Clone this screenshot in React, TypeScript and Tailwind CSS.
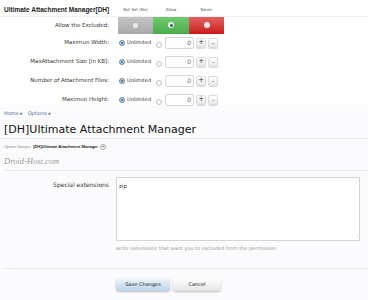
import React from "react";

const Radio = ({ on }: { on?: boolean }) =>
  on ? (
    <span className="inline-flex h-[6px] w-[6px] items-center justify-center rounded-full border border-[#7a9bb5] bg-[#2f5f80] shadow-[inset_0_0_0_1px_#d8e6f0]" />
  ) : (
    <span className="inline-block h-[6px] w-[6px] rounded-full border border-[#bdbdbd] bg-white" />
  );

const NumRow = ({ label }: { label: string }) => (
  <div className="flex h-[19px] items-center">
    <div className="w-[110px] pr-[1px] text-right text-[5.5px] text-[#333]">{label}</div>
    <div className="flex items-center pl-[9px]">
      <Radio on />
      <span className="ml-[2px] text-[5px] text-[#333]">Unlimited</span>
      <span className="ml-[5px]">
        <Radio />
      </span>
      <div className="ml-[3px] flex h-[12px] w-[29px] items-center justify-end rounded-[2px] border border-[#d6d6d6] bg-white pr-[2px] text-[6px] italic text-[#666]">
        0
      </div>
      <div className="ml-[2px] flex h-[10px] w-[10px] items-center justify-center rounded-[2px] border border-[#dcdcdc] bg-gradient-to-b from-white to-[#e6e6e6] text-[7px] leading-none text-[#333] shadow-[0_1px_1px_rgba(0,0,0,0.15)]">
        +
      </div>
      <div className="ml-[2px] flex h-[10px] w-[10px] items-center justify-center rounded-[2px] border border-[#dcdcdc] bg-gradient-to-b from-white to-[#e6e6e6] text-[6px] leading-none text-[#333] shadow-[0_1px_1px_rgba(0,0,0,0.15)]">
        -
      </div>
    </div>
  </div>
);

export default function App() {
  return (
    <div
      className="h-[300px] w-[368px] overflow-hidden bg-[#fbfbfd]"
      style={{ fontFamily: '"DejaVu Sans", Verdana, sans-serif' }}
    >
      {/* top panel */}
      <div className="h-[105px] bg-white pt-[4px]">
        <div className="flex h-[12px] items-center">
          <div
            className="w-[118px] whitespace-nowrap pl-[4px] text-[6.5px] font-bold text-[#222]"
            style={{ fontFamily: '"Liberation Sans", Arial, sans-serif' }}
          >
            Ultimate Attachment Manager[DH]
          </div>
          <div className="flex w-[106px] whitespace-nowrap text-[4px] text-[#555]">
            <span className="w-[35px] text-center">Not Set (No)</span>
            <span className="w-[36px] text-center">Allow</span>
            <span className="w-[35px] text-center">Never</span>
          </div>
        </div>
        <div className="flex h-[17px] items-center border-t border-[#f0f0f0]">
          <div className="w-[110px] pr-[1px] text-right text-[5.5px] text-[#333]">Allow the Excluded:</div>
          <div className="ml-[8px] flex h-[17px]">
            <div className="flex w-[35px] items-center justify-center bg-gradient-to-b from-[#c4c4c4] to-[#a9a9a9]">
              <span className="h-[5px] w-[5px] rounded-full bg-[#e9e9e9]" />
            </div>
            <div className="flex w-[36px] items-center justify-center bg-gradient-to-b from-[#73c872] to-[#49ad48]">
              <span className="flex h-[6px] w-[6px] items-center justify-center rounded-full bg-[#eef6ee]">
                <span className="h-[3px] w-[3px] rounded-full bg-[#2a5a78]" />
              </span>
            </div>
            <div className="flex w-[35px] items-center justify-center bg-gradient-to-b from-[#e26060] to-[#c81414]">
              <span className="h-[6px] w-[6px] rounded-full bg-[#f3e6e6]" />
            </div>
          </div>
        </div>
        <div>
          <NumRow label="Maximun Width:" />
          <NumRow label="MaxAttachment Size [in KB]:" />
          <NumRow label="Number of Attachment Files:" />
          <NumRow label="Maximun Height:" />
        </div>
      </div>

      {/* breadcrumb & title */}
      <div className="px-[4px] pt-[5px]">
        <div className="text-[5px] text-[#4a6d99]">Home ▸ &nbsp; Options ▸</div>
        <div className="mt-[6px] whitespace-nowrap text-[11px] leading-none text-[#111]">
          [DH]Ultimate Attachment Manager
        </div>
      </div>
      <div className="mt-[3px] border-t border-[#e8e8ee]" />
      <div className="px-[4px] pt-[5px]">
        <div
          className="flex items-center whitespace-nowrap text-[4px] text-[#888]"
          style={{ fontFamily: '"Liberation Sans", Arial, sans-serif' }}
        >
          Option Groups:
          <span className="ml-[2px] font-bold text-[#222]">[DH]Ultimate Attachment Manager</span>
          <span className="ml-[2px] inline-flex h-[6px] w-[6px] items-center justify-center rounded-full border border-[#aaa] text-[4px] leading-none text-[#777]">
            ▾
          </span>
        </div>
        <div
          className="mt-[5px] text-[8.5px] italic text-[#9a9a9a]"
          style={{ fontFamily: '"Liberation Serif", serif' }}
        >
          Droid-Host.com
        </div>
      </div>
      <div className="ml-[4px] mt-[3px] border-t border-[#e6e6ec]" />

      {/* form */}
      <div className="flex pt-[6px]">
        <div className="w-[110px] pr-[1px] pt-[3px] text-right text-[6px] text-[#333]">Special extensions</div>
        <div className="ml-[6px]">
          <div className="relative h-[64px] w-[244px] border border-[#d4d4d4] bg-white px-[2px] pt-[4px] text-[5.5px] text-[#333]">
            zip
            <span className="absolute bottom-[1px] right-[1px] text-[4px] leading-none text-[#aaa]">⁞</span>
          </div>
          <div className="mt-[4px] whitespace-nowrap text-[5px] text-[#999]">
            write extensions that want you to excluded from the permission
          </div>
        </div>
      </div>
      <div className="ml-[4px] mt-[15px] border-t border-[#e6e6ec]" />
      <div className="flex gap-[3px] pl-[116px] pt-[9px]">
        <div className="flex h-[13px] w-[54px] items-center justify-center rounded-[3px] bg-gradient-to-b from-[#f0f6fc] to-[#bcd3ea] text-[5px] text-[#222] shadow-[0_1px_2px_rgba(0,0,0,0.25)]">
          Save Changes
        </div>
        <div className="flex h-[13px] w-[48px] items-center justify-center rounded-[3px] bg-gradient-to-b from-white to-[#e4e4e4] text-[5px] text-[#222] shadow-[0_1px_2px_rgba(0,0,0,0.25)]">
          Cancel
        </div>
      </div>
    </div>
  );
}
